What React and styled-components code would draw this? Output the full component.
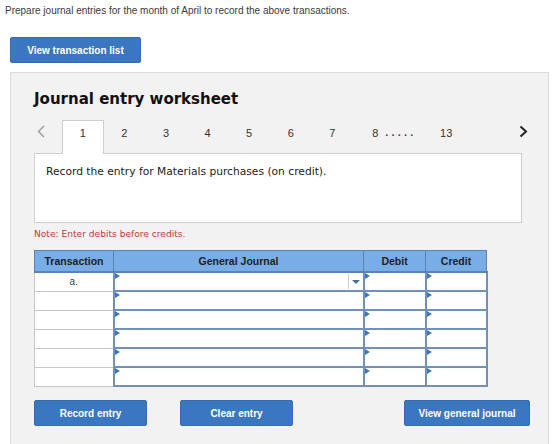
import styled, { createGlobalStyle } from 'styled-components';

// Global
const GlobalStyle = createGlobalStyle`
	body {
		margin: 0;
		background: #fff;
		font-family: 'Liberation Sans', Arial, sans-serif;
		color: #333;
	}
`;

// Style
const Page = styled.div`
	padding-top: 4px;
`;

const Intro = styled.p`
	margin: 0 0 0 5px;
	font-size: 10px;
	line-height: 13px;
	color: #3a3a3a;
`;

const BlueButton = styled.button`
	display: flex;
	align-items: center;
	justify-content: center;
	width: ${(p) => p.$w}px;
	height: 26px;
	padding: 0;
	border: 1px solid #336db4;
	border-radius: 2px;
	background: #3b77c1;
	color: #fff;
	font-family: 'Liberation Sans', Arial, sans-serif;
	font-weight: bold;
	font-size: 10px;
	cursor: pointer;
`;

const TopButton = styled(BlueButton)`
	margin: 20px 0 0 10px;
`;

const Panel = styled.section`
	margin: 9px 0 0 10px;
	width: 539px;
	box-sizing: border-box;
	height: 380px;
	border: 1px solid #dcdcdc;
	border-bottom: none;
	background: #f2f2f2;
	padding: 17px 18px 0 23px;
`;

const Title = styled.h2`
	margin: 0;
	font-family: 'DejaVu Sans', Verdana, sans-serif;
	font-size: 15px;
	font-weight: bold;
	line-height: 18px;
	color: #111;
`;

const TabBar = styled.div`
	display: flex;
	align-items: flex-end;
	height: 34px;
	margin-top: 11px;
	width: 488px;
`;

const Arrow = styled.span`
	box-sizing: border-box;
	display: flex;
	align-items: center;
	align-self: stretch;
	width: ${(p) => (p.$side === 'left' ? '28px' : 'auto')};
	padding: 0 0 9px ${(p) => (p.$side === 'left' ? 3 : 0)}px;
	margin-left: ${(p) => (p.$side === 'right' ? 'auto' : 0)};
	margin-right: ${(p) => (p.$side === 'right' ? -6 : 0)}px;
	color: ${(p) => (p.$side === 'left' ? '#999' : '#222')};
`;

const Tab = styled.span`
	box-sizing: border-box;
	display: flex;
	justify-content: ${(p) => (p.$lead ? 'flex-start' : 'center')};
	width: ${(p) => p.$w}px;
	height: 34px;
	padding-top: 5px;
	padding-left: ${(p) => p.$lead || 0}px;
	font-size: 11px;
	line-height: 14px;
	color: #333;
	border: 1px solid ${(p) => (p.$active ? '#cfcfcf' : 'transparent')};
	border-bottom: none;
	background: ${(p) => (p.$active ? '#fff' : 'transparent')};
	margin-bottom: -1px;
`;

const Dots = styled.span`
	align-self: flex-start;
	margin-top: 6px;
	width: 30px;
	font-size: 11px;
	line-height: 14px;
	font-weight: bold;
	letter-spacing: 3.2px;
	color: #444;
`;

const EntryBox = styled.div`
	box-sizing: border-box;
	width: 488px;
	height: 70px;
	background: #fff;
	border: 1px solid #d0d0d0;
	padding: 11px 11px;
	font-family: 'DejaVu Sans', Verdana, sans-serif;
	font-size: 10.7px;
	color: #222;
`;

const Note = styled.p`
	margin: 5px 0 0;
	font-family: 'DejaVu Sans', Verdana, sans-serif;
	font-size: 9.1px;
	line-height: 12px;
	color: #c8383a;
`;

const Table = styled.table`
	margin-top: 10px;
	border-collapse: collapse;
	table-layout: fixed;
	width: 448px;
	font-size: 10.5px;
`;

const HeadCell = styled.th`
	height: 20px;
	padding: 0;
	background: #78ade6;
	border: 1px solid #5a83b8;
	border-bottom: 2px solid #5a83b8;
	font-weight: bold;
	color: #222;
	text-align: center;
	width: ${(p) => p.$w}px;
`;

const LabelCell = styled.td`
	height: 17px;
	padding: 0;
	background: #fff;
	border: 1px solid #c8c8c8;
	text-align: center;
	font-size: 10px;
	color: #444;
`;

const InputCell = styled.td`
	position: relative;
	height: 17px;
	padding: 0;
	background: #fff;
	border: 2px solid #7190bd;
	border-top-width: ${(p) => (p.$first ? 0 : 2)}px;

	&::before {
		content: '';
		position: absolute;
		left: 0;
		top: 0;
		border-top: 3px solid transparent;
		border-bottom: 3px solid transparent;
		border-left: 5px solid #3b77c1;
	}
`;

const Caret = styled.span`
	position: absolute;
	right: 0;
	top: 1px;
	bottom: 1px;
	width: 14px;
	border-left: 1px solid #d0d0d0;
	display: flex;
	align-items: center;
	justify-content: center;

	&::after {
		content: '';
		border-left: 4px solid transparent;
		border-right: 4px solid transparent;
		border-top: 4px solid #4a6f9c;
	}
`;

const ButtonRow = styled.div`
	display: flex;
	gap: 33px;
	margin-top: 13px;
	width: 496px;

	& > :last-child {
		margin-left: auto;
	}
`;

const rows = ['a.', '', '', '', '', ''];
const tabs = ['1', '2', '3', '4', '5', '6', '7'];

// Render
export default function App() {
	return (
		<Page>
			<GlobalStyle />
			<Intro>Prepare journal entries for the month of April to record the above transactions.</Intro>
			<TopButton $w={131}>View transaction list</TopButton>

			<Panel>
				<Title>Journal entry worksheet</Title>

				<TabBar>
					<Arrow $side="left">
						<svg width="8" height="13" viewBox="0 0 8 13">
							<path d="M7 1 L1.5 6.5 L7 12" fill="none" stroke="currentColor" strokeWidth="1.4" />
						</svg>
					</Arrow>
					{tabs.map((t, i) => (
						<Tab key={t} $active={i === 0} $w={41.6}>
							{t}
						</Tab>
					))}
					<Tab $w={32} $lead={18}>8</Tab>
					<Dots>.....</Dots>
					<Tab $w={62}>13</Tab>
					<Arrow $side="right">
						<svg width="9" height="13" viewBox="0 0 9 13">
							<path d="M1.5 1.5 L7 6.5 L1.5 11.5" fill="none" stroke="currentColor" strokeWidth="2" />
						</svg>
					</Arrow>
				</TabBar>

				<EntryBox>Record the entry for Materials purchases (on credit).</EntryBox>

				<Note>Note: Enter debits before credits.</Note>

				<Table>
					<thead>
						<tr>
							<HeadCell $w={78}>Transaction</HeadCell>
							<HeadCell $w={249}>General Journal</HeadCell>
							<HeadCell $w={61}>Debit</HeadCell>
							<HeadCell $w={60}>Credit</HeadCell>
						</tr>
					</thead>
					<tbody>
						{rows.map((r, i) => (
							<tr key={i}>
								<LabelCell>{r}</LabelCell>
								<InputCell $first={i === 0}>{i === 0 && <Caret />}</InputCell>
								<InputCell $first={i === 0} />
								<InputCell $first={i === 0} />
							</tr>
						))}
					</tbody>
				</Table>

				<ButtonRow>
					<BlueButton $w={113}>Record entry</BlueButton>
					<BlueButton $w={113}>Clear entry</BlueButton>
					<BlueButton $w={126}>View general journal</BlueButton>
				</ButtonRow>
			</Panel>
		</Page>
	);
}
